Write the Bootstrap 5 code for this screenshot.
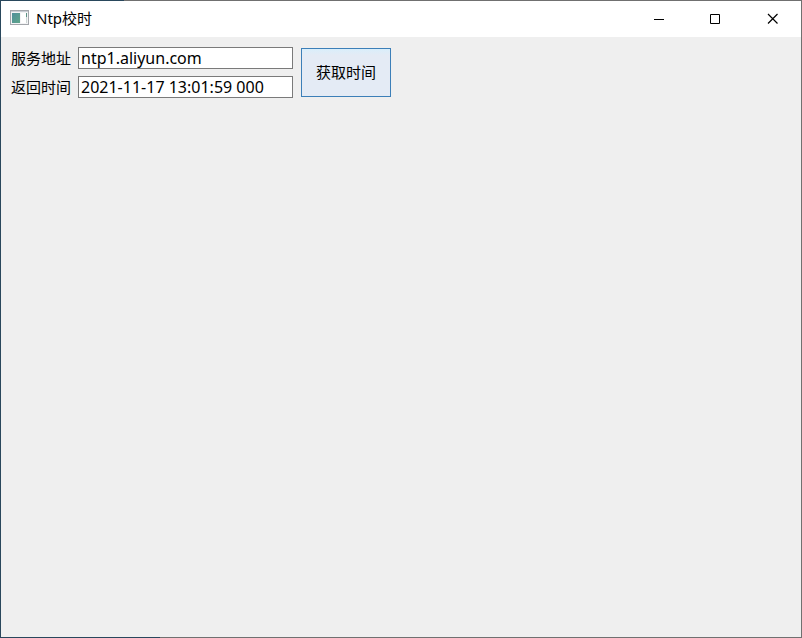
<!DOCTYPE html>
<html lang="zh-CN">
<head>
<meta charset="utf-8">
<meta name="viewport" content="width=device-width, initial-scale=1">
<title>Ntp校时</title>
<link href="https://cdn.jsdelivr.net/npm/bootstrap@5.3.0/dist/css/bootstrap.min.css" rel="stylesheet">
<style>
  body {
    font-family: "Noto Sans", "Noto Sans CJK SC", sans-serif;
    font-size: 15px;
    line-height: 20px;
    color: #000;
  }
  .app-window {
    padding: 1px;
    background:
      linear-gradient(#29475c, #29475c) left top / 124px 1px no-repeat,
      linear-gradient(#29475c, #29475c) left bottom / 160px 1px no-repeat,
      linear-gradient(#29475c, #29475c) left top / 1px 100% no-repeat,
      #707070;
  }
  .title-bar { height: 36px; padding: 0 0 2px 9px; background: #fff; }
  .title-text { font-size: 15px; line-height: 20px; gap: 7px; }
  .caption-btn { width: 57px; height: 34px; }
  .caption-btn:hover { background: #e5e5e5; }
  .client-area { padding: 10px; background: #efefef; }
  .ntp-form { gap: 8px; }
  .field-grid {
    display: grid;
    grid-template-columns: auto 215px;
    gap: 7px;
  }
  .field-input {
    height: 22px;
    padding: 0 2px;
    border: 1px solid #7a7a7a;
    border-radius: 0;
    background: #fff;
    color: #000;
    font-size: 16px;
    line-height: 20px;
  }
  .fetch-btn {
    width: 90px;
    height: 49px;
    margin-top: 1px;
    border: 1px solid #3c7fb8;
    border-radius: 0;
    background: linear-gradient(#d9eefb, #e4ebf5 6px);
    color: #000;
    font-size: 15px;
  }
</style>
</head>
<body>
<div class="app-window d-flex flex-column vh-100">
  <header class="title-bar d-flex align-items-center justify-content-between">
    <h1 class="title-text d-flex align-items-center fw-normal m-0">
      <svg width="19" height="16" viewBox="0 0 19 16" aria-hidden="true">
        <defs>
          <linearGradient id="pane" x1="0" y1="0" x2="1" y2="1">
            <stop offset="0" stop-color="#4f8f9b"/>
            <stop offset="1" stop-color="#5fa58a"/>
          </linearGradient>
        </defs>
        <rect x=".5" y=".5" width="18" height="14" fill="#f3f3f5" stroke="#a3a6ab"/>
        <path d="M1 1.5h17" stroke="#c9cdd4"/>
        <rect x="2" y="3" width="8" height="10" fill="url(#pane)"/>
        <rect x="11" y="3" width="5" height="10" fill="#fff"/>
        <path d="M16.500 3v4" stroke="#5b9184"/>
        <path d="M16.500 7v6" stroke="#cdd6d4"/>
      </svg>
      <span>Ntp校时</span>
    </h1>
    <div class="d-flex">
      <button type="button" class="caption-btn btn p-0 border-0 rounded-0 d-flex align-items-center justify-content-center" aria-label="最小化">
        <svg width="11" height="11" viewBox="0 0 11 11" fill="none" stroke="#000" aria-hidden="true"><path d="M1 6.500h10"/></svg>
      </button>
      <button type="button" class="caption-btn btn p-0 border-0 rounded-0 d-flex align-items-center justify-content-center" aria-label="最大化">
        <svg width="11" height="11" viewBox="0 0 11 11" fill="none" stroke="#000" aria-hidden="true"><path d="M.5 1.500h9v9h-9z"/></svg>
      </button>
      <button type="button" class="caption-btn btn p-0 border-0 rounded-0 d-flex align-items-center justify-content-center" aria-label="关闭">
        <svg width="11" height="11" viewBox="0 0 11 11" fill="none" stroke="#000" stroke-width="1.200" aria-hidden="true"><path d="M1 1l9.500 9.500M10.500 1L1 10.500"/></svg>
      </button>
    </div>
  </header>
  <main class="client-area flex-grow-1">
    <form class="ntp-form d-flex align-items-start">
      <div class="field-grid align-items-center">
        <label for="server">服务地址</label>
        <input id="server" type="text" class="field-input w-100" value="ntp1.aliyun.com">
        <label for="result">返回时间</label>
        <input id="result" type="text" class="field-input w-100" value="2021-11-17 13:01:59 000">
      </div>
      <button type="button" class="fetch-btn btn p-0">获取时间</button>
    </form>
  </main>
</div>
<script src="https://cdn.jsdelivr.net/npm/bootstrap@5.3.0/dist/js/bootstrap.bundle.min.js"></script>
</body>
</html>
